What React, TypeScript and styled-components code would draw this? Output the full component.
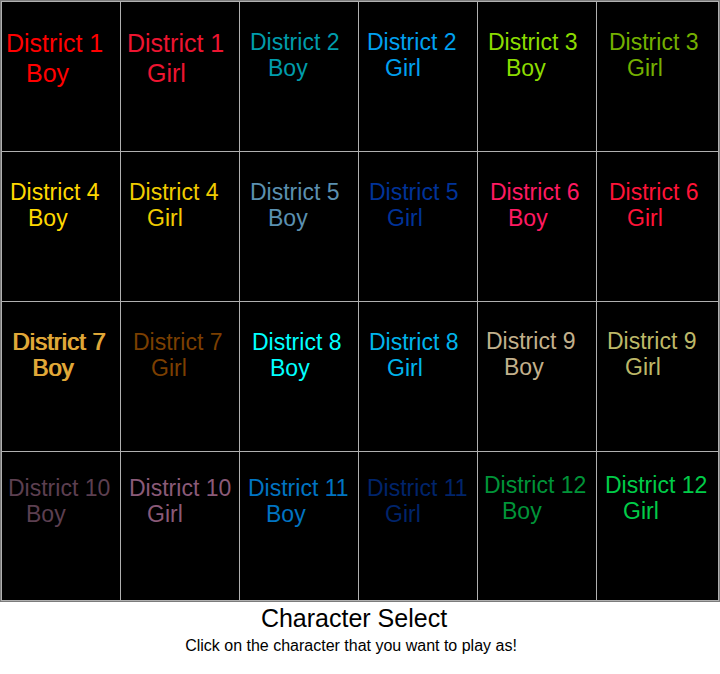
import React, { useState } from "react";
import styled, { createGlobalStyle } from "styled-components";

type Inset = 4 | 6 | 8 | 10 | 12;

interface Character {
  district: number;
  role: "Boy" | "Girl";
  color: string;
  inset: Inset;
  variant?: "large" | "strong";
}

const characters: Character[] = [
  { district: 1, role: "Boy", color: "#ff0000", inset: 4, variant: "large" },
  { district: 1, role: "Girl", color: "#ed1530", inset: 6, variant: "large" },
  { district: 2, role: "Boy", color: "#009cab", inset: 10 },
  { district: 2, role: "Girl", color: "#00a0f0", inset: 8 },
  { district: 3, role: "Boy", color: "#8cdc00", inset: 10 },
  { district: 3, role: "Girl", color: "#74b000", inset: 12 },
  { district: 4, role: "Boy", color: "#ffd800", inset: 8 },
  { district: 4, role: "Girl", color: "#f0cc00", inset: 8 },
  { district: 5, role: "Boy", color: "#5b90b0", inset: 10 },
  { district: 5, role: "Girl", color: "#003399", inset: 10 },
  { district: 6, role: "Boy", color: "#ff1a62", inset: 12 },
  { district: 6, role: "Girl", color: "#ff1438", inset: 12 },
  { district: 7, role: "Boy", color: "#e0a838", inset: 10, variant: "strong" },
  { district: 7, role: "Girl", color: "#7b3f00", inset: 12 },
  { district: 8, role: "Boy", color: "#00ffff", inset: 12 },
  { district: 8, role: "Girl", color: "#00b4ec", inset: 10 },
  { district: 9, role: "Boy", color: "#c2b08c", inset: 8 },
  { district: 9, role: "Girl", color: "#bdb868", inset: 10 },
  { district: 10, role: "Boy", color: "#5c3f50", inset: 6 },
  { district: 10, role: "Girl", color: "#8a5a78", inset: 8 },
  { district: 11, role: "Boy", color: "#0074c2", inset: 8 },
  { district: 11, role: "Girl", color: "#00246b", inset: 8 },
  { district: 12, role: "Boy", color: "#009338", inset: 6 },
  { district: 12, role: "Girl", color: "#00cc48", inset: 8 },
];

const GlobalStyle = createGlobalStyle`
  * { box-sizing: border-box; }
  body {
    margin: 0;
    background: #fff;
    color: #000;
    font-family: "Liberation Sans", Arial, sans-serif;
  }
`;

const Page = styled.main`
  display: flex;
  flex-direction: column;
`;

const Frame = styled.div`
  border: 1px solid #7c7c7c;
`;

const Board = styled.div`
  display: grid;
  grid-template-columns: repeat(5, 118fr) 121fr;
  grid-template-rows: repeat(3, 149px) 148px;
  gap: 1px;
  border: 1px solid #b0b0b0;
  background: #b0b0b0;
`;

const topSpace = (district: number, variant?: string) => {
  if (district === 12) return 20;
  if (district > 9) return 23;
  return variant === "large" || district === 9 ? 26 : 27;
};

const Tile = styled.button<{
  $color: string;
  $inset: Inset;
  $district: number;
  $variant?: "large" | "strong";
}>`
  display: flex;
  flex-direction: column;
  align-items: flex-start;
  min-width: 0;
  margin: 0;
  padding: ${(p) => topSpace(p.$district, p.$variant)}px 0 0 ${(p) => p.$inset}px;
  border: 0;
  border-radius: 0;
  background: #000;
  color: ${(p) => p.$color};
  font-family: inherit;
  font-size: ${(p) =>
    p.$variant === "large" ? 25 : p.$variant === "strong" ? 24 : 23}px;
  line-height: ${(p) => (p.$variant === "large" ? 30 : 26)}px;
  text-align: left;
  white-space: nowrap;
  text-shadow: ${(p) => (p.$variant === "strong" ? "1px 0 0 #e0a838" : "none")};
  cursor: pointer;

  &:focus-visible {
    outline: 2px solid #fff;
    outline-offset: -4px;
  }
`;

const Role = styled.span<{ $wide: boolean }>`
  padding-left: ${(p) => (p.$wide ? 20 : 18)}px;
`;

const Caption = styled.header`
  display: flex;
  flex-direction: column;
  align-items: center;
  text-align: center;
`;

const Title = styled.h1`
  margin: 0;
  padding: 2px 12px 0 0;
  font-size: 25px;
  line-height: 28px;
  font-weight: 400;
`;

const Hint = styled.p`
  margin: 0;
  padding: 4px 18px 0 0;
  font-size: 16px;
  line-height: 20px;
`;

export default function App() {
  const [selected, setSelected] = useState<number | null>(null);

  return (
    <>
      <GlobalStyle />
      <Page>
        <Frame>
          <Board>
            {characters.map((c, i) => (
              <Tile
                key={`${c.district}-${c.role}`}
                type="button"
                aria-pressed={selected === i}
                onClick={() => setSelected(i)}
                $color={c.color}
                $inset={c.inset}
                $district={c.district}
                $variant={c.variant}
              >
                <span>District {c.district}</span>
                <Role $wide={c.variant !== undefined}>{c.role}</Role>
              </Tile>
            ))}
          </Board>
        </Frame>
        <Caption>
          <Title>Character Select</Title>
          <Hint>Click on the character that you want to play as!</Hint>
        </Caption>
      </Page>
    </>
  );
}
